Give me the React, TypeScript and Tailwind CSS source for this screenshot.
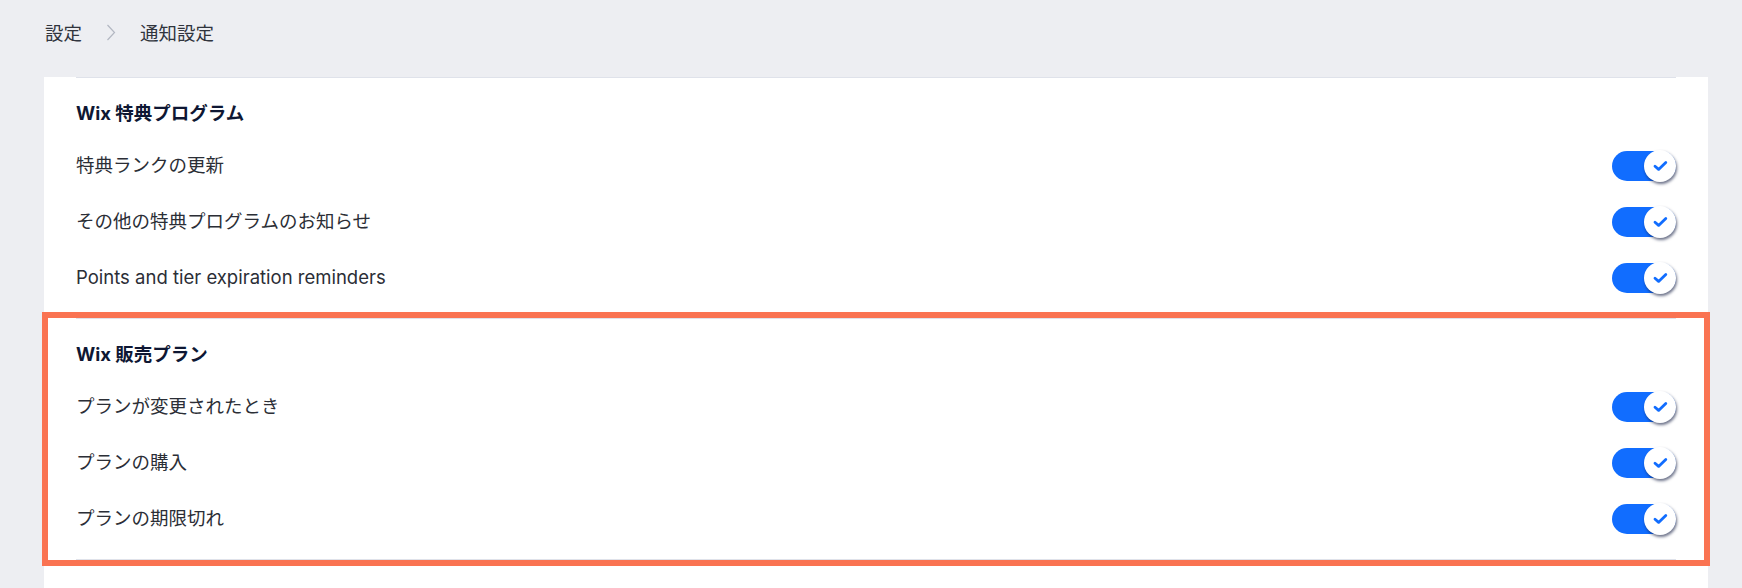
import React from "react";

type Section = {
    title: string;
    items: string[];
    highlighted?: boolean;
};

const sections: Section[] = [
    {
        title: "Wix 特典プログラム",
        items: ["特典ランクの更新", "その他の特典プログラムのお知らせ", "Points and tier expiration reminders"],
    },
    {
        title: "Wix 販売プラン",
        items: ["プランが変更されたとき", "プランの購入", "プランの期限切れ"],
        highlighted: true,
    },
];

const font = { fontFamily: '"Inter", "Noto Sans CJK JP", sans-serif' };

// Toggle switch, always on in this screen
const Toggle: React.FC = () => (
    <div className="relative h-[30px] w-[64px] rounded-full bg-[#116dff]">
        <div className="absolute right-0 top-1/2 flex h-[32px] w-[32px] -translate-y-1/2 items-center justify-center rounded-full bg-white shadow-[1px_2px_3px_rgba(12,22,60,0.6)]">
            <svg width="15" height="12" viewBox="0 0 15 12" fill="none">
                <path d="M2 6.2 L5.6 9.4 L12.8 2.4" stroke="#116dff" strokeWidth="2.8" strokeLinecap="round" strokeLinejoin="round" />
            </svg>
        </div>
    </div>
);

const SettingsSection: React.FC<{ section: Section }> = ({ section }) => (
    <div className="relative">
        <div className="h-px bg-[#dfe2ea]" />
        <div className="pt-[23px] pb-[12px]">
            <h3 className="h-6 text-[18.5px] font-bold leading-6 text-[#0e1733]">{section.title}</h3>
            <div className="mt-[13px]">
                {section.items.map((item) => (
                    <div key={item} className="flex h-[56px] items-center justify-between">
                        <span className="text-[18.5px] text-[#2b2e36]">{item}</span>
                        <Toggle />
                    </div>
                ))}
            </div>
        </div>
        {section.highlighted && (
            <div className="pointer-events-none absolute -bottom-[7px] -left-[34px] -right-[34px] -top-[6px] border-[6px] border-[#fa7352]" />
        )}
    </div>
);

const App: React.FC = () => {
    return (
        <div className="flex min-h-[588px] flex-col bg-[#edeef2]" style={font}>
            {/* Breadcrumbs */}
            <header className="flex h-[77px] shrink-0 items-start gap-[24px] pl-[45px] pt-[19px] text-[18.5px] leading-[28px] text-[#30343d]">
                <span>設定</span>
                <svg width="10" height="28" viewBox="0 0 10 28" fill="none">
                    <path d="M1.5 6 L8.5 13.5 L1.5 21" stroke="#b3b7c2" strokeWidth="1.2" />
                </svg>
                <span>通知設定</span>
            </header>

            <div className="flex flex-1 pl-[44px] pr-[34px]">
                <main className="flex-1 bg-white px-8">
                    {sections.map((section) => (
                        <SettingsSection key={section.title} section={section} />
                    ))}
                    <div className="h-px bg-[#dfe2ea]" />
                </main>
            </div>
        </div>
    );
};

export default App;
